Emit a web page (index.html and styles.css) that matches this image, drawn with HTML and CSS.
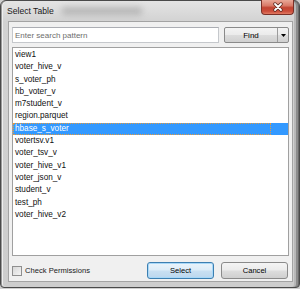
FILE: index.html
```html
<!DOCTYPE html>
<html>
<head>
<meta charset="utf-8">
<link rel="stylesheet" href="styles.css">
</head>
<body>
<div class="win">
  <div class="titlebar">
    <span class="title">Select Table</span>
    <span class="blurred"></span>
    <span class="spacer"></span>
    <span class="close">
      <svg width="12" height="10" viewBox="0 0 12 10">
        <path d="M3 2 L9 8 M9 2 L3 8" stroke="#5a2a22" stroke-width="3.4" stroke-linecap="round"/>
        <path d="M3 2 L9 8 M9 2 L3 8" stroke="#ffffff" stroke-width="1.8" stroke-linecap="round"/>
      </svg>
    </span>
  </div>
  <div class="client">
    <div class="search">
      <div class="input"><span class="placeholder">Enter search pattern</span></div>
      <div class="find">
        <span class="find-label">Find</span>
        <span class="find-arrow">
          <svg width="5" height="3" viewBox="0 0 5 3"><path d="M0 0 H5 L2.5 3 Z" fill="#000"/></svg>
        </span>
      </div>
    </div>
    <ul class="list">
      <li>view1</li>
      <li>voter_hive_v</li>
      <li>s_voter_ph</li>
      <li>hb_voter_v</li>
      <li>m7student_v</li>
      <li>region.parquet</li>
      <li class="sel">hbase_s_voter</li>
      <li>votertsv.v1</li>
      <li>voter_tsv_v</li>
      <li>voter_hive_v1</li>
      <li>voter_json_v</li>
      <li>student_v</li>
      <li>test_ph</li>
      <li>voter_hive_v2</li>
    </ul>
    <div class="footer">
      <label class="check"><span class="box"></span><span>Check Permissions</span></label>
      <div class="buttons">
        <div class="btn btn-default">Select</div>
        <div class="btn">Cancel</div>
      </div>
    </div>
  </div>
</div>
</body>
</html>
```
FILE: styles.css
```css
html, body {
  margin: 0;
  padding: 0;
}
body {
  width: 300px;
  height: 289px;
  background: #cfcfcf;
  font-family: "Liberation Sans", Arial, sans-serif;
  overflow: hidden;
}
.win {
  width: 300px;
  height: 288px;
  box-sizing: border-box;
  border: 1px solid #4a4a4a;
  border-radius: 6px 6px 4px 4px;
  padding: 0 6px 5px 7px;
  display: flex;
  flex-direction: column;
  background: linear-gradient(to bottom, #e4e4e4 0px, #d2d2d2 21px, #cdcdcd 100%);
  box-shadow: inset -1px 0 0 #6a6a6a, inset -3px 0 0 #8c8c8c, inset -5px 0 0 #b8b8b8, inset 1px 0 0 #9a9a9a, inset 2px 0 0 #efefef;
}
.titlebar {
  height: 20px;
  display: flex;
  align-items: flex-start;
}
.title {
  margin-left: -1px;
  margin-top: 5px;
  font-size: 8.6px;
  line-height: 10px;
  color: #1a1a1a;
}
.blurred {
  margin-left: 8px;
  margin-top: 6px;
  width: 80px;
  height: 8px;
  background: #9a9a9a;
  filter: blur(3px);
  opacity: 0.55;
}
.spacer {
  flex: 1;
}
.close {
  margin-top: -1px;
  margin-right: -1px;
  width: 33px;
  height: 15px;
  box-sizing: border-box;
  border: 1px solid #7a3027;
  border-top: none;
  border-radius: 0 0 4px 4px;
  background: linear-gradient(to bottom, #e9a898 0%, #d97a68 40%, #c24432 55%, #cc4d3b 80%, #e07a62 100%);
  display: flex;
  align-items: center;
  justify-content: center;
}
.client {
  flex: 1;
  display: flex;
  flex-direction: column;
  box-sizing: border-box;
  border: 1px solid #a3a3a3;
  background: #f0f0f0;
  padding: 5px 3px 2px 3px;
}
.search {
  height: 16px;
  display: flex;
  gap: 5px;
}
.input {
  flex: 1;
  box-sizing: border-box;
  border: 1px solid #c5c8cc;
  border-top-color: #abadb3;
  background: #fff;
  display: flex;
  align-items: center;
  padding-left: 2px;
}
.placeholder {
  font-size: 8px;
  color: #6d6d6d;
}
.find {
  width: 65px;
  box-sizing: border-box;
  border: 1px solid #8a8a8a;
  border-radius: 2px;
  background: linear-gradient(to bottom, #f4f4f4 0%, #ebebeb 48%, #dcdcdc 52%, #d0d0d0 100%);
  display: flex;
}
.find-label {
  width: 53px;
  box-sizing: border-box;
  border-right: 1px solid #9c9c9c;
  display: flex;
  align-items: center;
  justify-content: center;
  font-size: 8px;
  color: #000;
}
.find-arrow {
  flex: 1;
  display: flex;
  align-items: center;
  justify-content: center;
}
.list {
  flex: 1;
  margin: 4px 0 0 0;
  padding: 1px 0 0 0;
  list-style: none;
  border: 1px solid #a0a0a0;
  background: #fff;
}
.list li {
  position: relative;
  height: 12.3px;
  line-height: 12.3px;
  padding-left: 2px;
  font-size: 8.2px;
  color: #111;
  white-space: nowrap;
}
.list li.sel {
  background: #3399ff;
  color: #fff;
}
.list li.sel::after {
  content: "";
  position: absolute;
  left: 0;
  top: 0;
  width: 258px;
  height: 12.3px;
  box-sizing: border-box;
  border: 1px dotted #e69a3c;
}
.footer {
  margin-top: 6px;
  height: 17px;
  display: flex;
  align-items: center;
  justify-content: space-between;
}
.check {
  display: flex;
  align-items: center;
  font-size: 7.6px;
  color: #1a1a1a;
}
.box {
  width: 10px;
  height: 10px;
  box-sizing: border-box;
  border: 1px solid #8f8f8f;
  background: linear-gradient(135deg, #d8d8d8 0%, #f4f4f4 100%);
  margin-right: 3px;
}
.buttons {
  display: flex;
  gap: 7px;
  margin-right: 1px;
}
.btn {
  width: 67px;
  height: 17px;
  box-sizing: border-box;
  border: 1px solid #8a8a8a;
  border-radius: 3px;
  background: linear-gradient(to bottom, #f4f4f4 0%, #ebebeb 48%, #dddddd 52%, #cfcfcf 100%);
  display: flex;
  align-items: center;
  justify-content: center;
  font-size: 7.6px;
  color: #000;
}
.btn-default {
  border-color: #3c7fb1;
  background: linear-gradient(to bottom, #eaf4fb 0%, #dcecf8 48%, #c9e0f2 52%, #bcd7ee 100%);
  box-shadow: inset 0 0 0 1px #a8d8f8;
}
```
